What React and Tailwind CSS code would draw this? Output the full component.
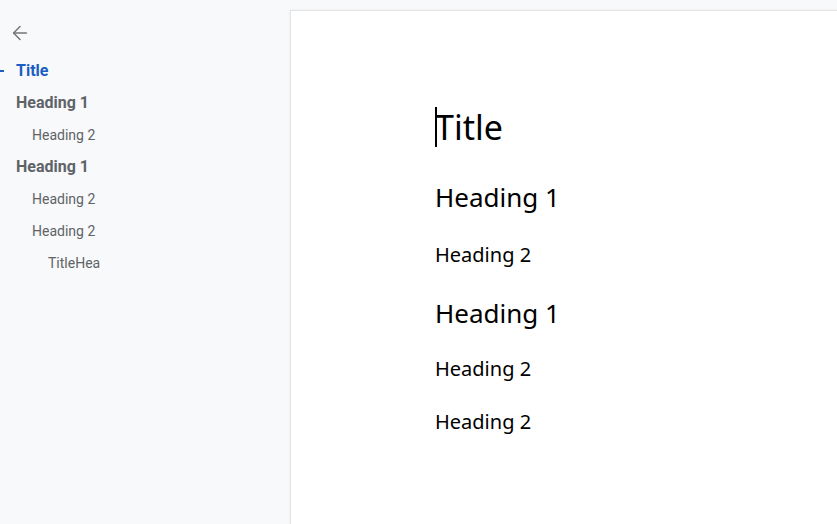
import { ArrowLeft } from 'lucide-react';

// outline entries shown in the left panel
const outline = [
  { text: 'Title', level: 0, active: true },
  { text: 'Heading 1', level: 1 },
  { text: 'Heading 2', level: 2 },
  { text: 'Heading 1', level: 1 },
  { text: 'Heading 2', level: 2 },
  { text: 'Heading 2', level: 2 },
  { text: 'TitleHea', level: 3 },
];

function OutlineItem({ item }) {
  const pad = ['pl-4', 'pl-4', 'pl-8', 'pl-12'][item.level];
  let cls = 'text-[14px] text-[#5f6368]';
  if (item.level === 0) cls = 'text-[16px] font-bold text-[#1a5ec4]';
  else if (item.level === 1) cls = 'text-[16px] font-bold text-[#5f6368]';
  return (
    <div className={`relative h-8 flex items-center ${pad}`}>
      {item.active && <div className="absolute left-0 top-[15px] w-[4px] h-[2px] bg-[#1a5ec4]" />}
      <span className={cls}>{item.text}</span>
    </div>
  );
}

export default function App() {
  return (
    <div className="w-[837px] h-[524px] overflow-hidden bg-[#f8f9fa] flex" style={{ fontFamily: 'Roboto, "Liberation Sans", sans-serif' }}>
      {/* outline panel */}
      <div className="w-[290px] shrink-0 pt-[22px]">
        <div className="pl-[9px] h-[22px] flex items-center">
          <ArrowLeft size={22} strokeWidth={1.6} className="text-[#757575]" />
        </div>
        <div className="mt-[11px]">
          {outline.map((item, i) => (
            <OutlineItem key={i} item={item} />
          ))}
        </div>
      </div>

      {/* document page */}
      <div className="flex-1 mt-[10px] bg-white border-l border-t border-[#e3e4e6] shadow-[0_0_2px_rgba(0,0,0,0.08)] pl-[144px] pt-[96px] text-black" style={{ fontFamily: '"Noto Sans", "Open Sans", sans-serif' }}>
        <div className="relative text-[34px] leading-[40px] h-[40px]">
          <span className="absolute left-0 top-0 w-[2px] h-[40px] bg-black" />
          Title
        </div>
        <div className="text-[26px] leading-[32px] mt-[34px]">Heading 1</div>
        <div className="text-[20px] leading-[26px] mt-[29px]">Heading 2</div>
        <div className="text-[26px] leading-[32px] mt-[29px]">Heading 1</div>
        <div className="text-[20px] leading-[26px] mt-[27px]">Heading 2</div>
        <div className="text-[20px] leading-[26px] mt-[27px]">Heading 2</div>
      </div>
    </div>
  );
}
